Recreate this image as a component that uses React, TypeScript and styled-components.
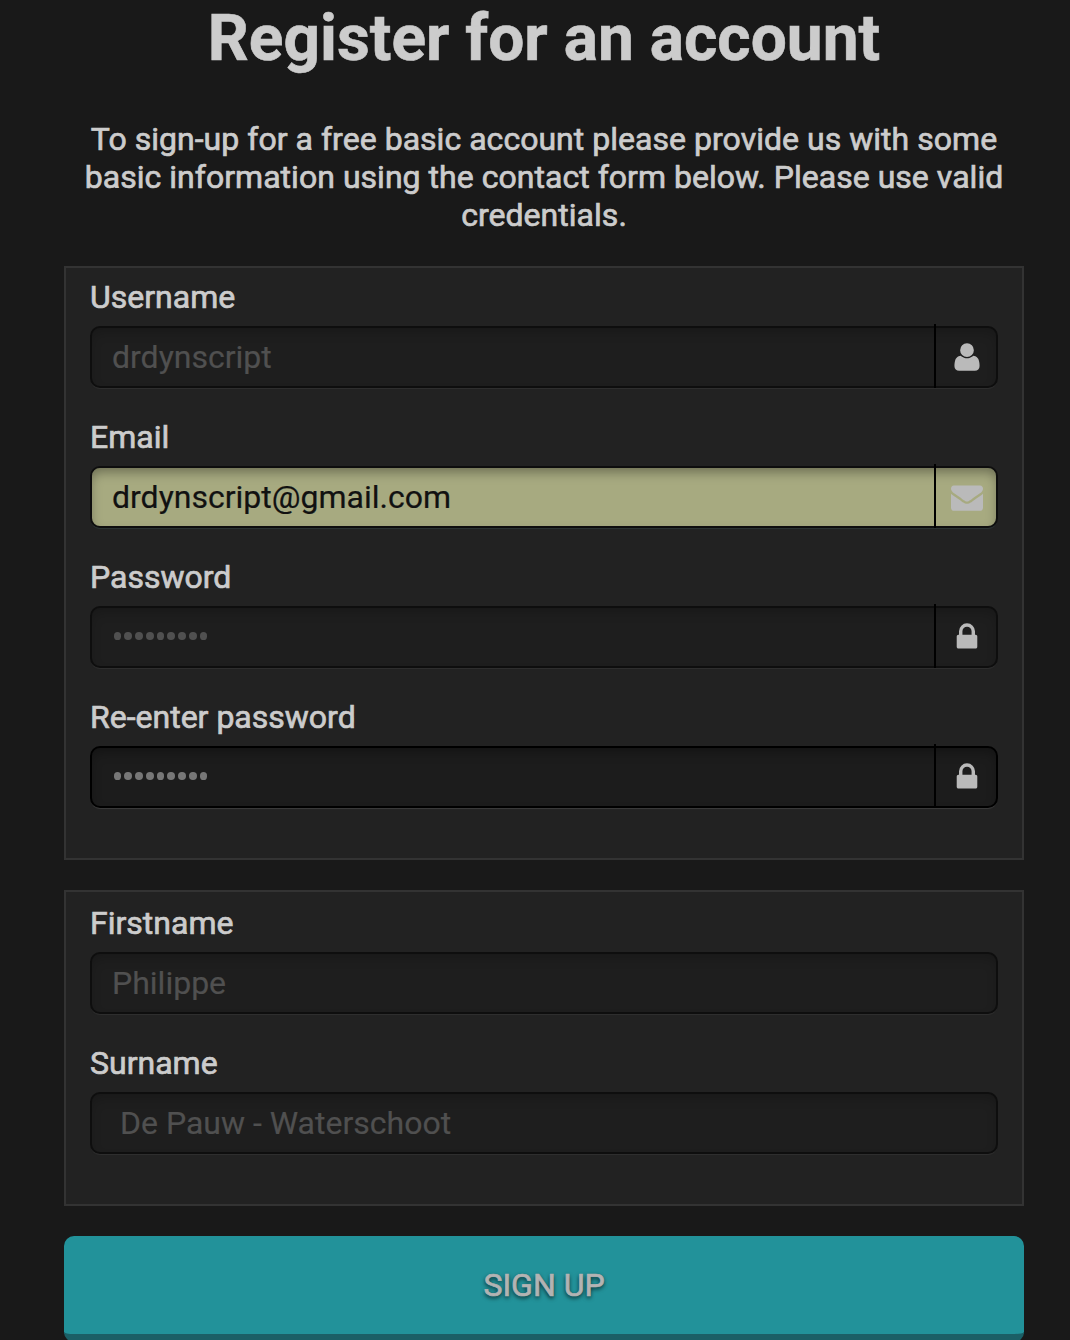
import React from "react";
import styled, { createGlobalStyle } from "styled-components";

const GlobalStyle = createGlobalStyle`
  *, *::before, *::after { box-sizing: border-box; }
  html, body { margin: 0; height: 1340px; overflow: hidden; background: #191919; }
  body { font-family: Roboto, "Liberation Sans", sans-serif; color: #ccc; }
`;

const Page = styled.main`
  width: 1070px;
  height: 1340px;
  overflow: hidden;
  background: #191919;
  padding: 0 46px 0 64px;
`;

const Title = styled.h1`
  margin: 0;
  height: 120px;
  padding-top: 1px;
  font-size: 64px;
  line-height: 76px;
  font-weight: 700;
  text-align: center;
  white-space: nowrap;
  -webkit-text-stroke: 0.6px currentColor;
`;

const Intro = styled.p`
  margin: 0 0 32px;
  font-size: 32px;
  line-height: 38px;
  letter-spacing: 0.03px;
  text-align: center;
  -webkit-text-stroke: 0.7px currentColor;
`;

const Form = styled.form`
  display: flex;
  flex-direction: column;
  gap: 30px;
`;

const Panel = styled.section<{ $top?: number }>`
  display: flex;
  flex-direction: column;
  gap: 30px;
  padding: ${(p) => p.$top ?? 10}px 24px 50px;
  border: 2px solid #333;
  background: #222;
`;

const Group = styled.div`
  display: flex;
  flex-direction: column;
  gap: 10px;
`;

const Label = styled.label`
  height: 38px;
  font-size: 32px;
  line-height: 38px;
  -webkit-text-stroke: 0.7px currentColor;
`;

type Tone = "muted" | "filled" | "active";

const tones = {
  muted: { bg: "#1e1e1e", edge: "#0e0e0e", ink: "#505050", glow: "rgba(0,0,0,.2)", rim: "#303030" },
  filled: { bg: "#a7aa80", edge: "#0e0e0e", ink: "#111", glow: "rgba(0,0,0,.36)", rim: "#2d3636" },
  active: { bg: "#1c1c1c", edge: "#000", ink: "#777", glow: "rgba(0,0,0,.3)", rim: "#3c3c3c" },
};

const Field = styled.div<{ $tone: Tone }>`
  display: flex;
  height: 62px;
  border: 2px solid ${(p) => tones[p.$tone].edge};
  border-radius: 10px;
  background: ${(p) => tones[p.$tone].bg};
  color: ${(p) => tones[p.$tone].ink};
  box-shadow: inset 0 6px 12px -2px ${(p) => tones[p.$tone].glow}, 0 2px 1px -1px ${(p) => tones[p.$tone].rim};
`;

const Value = styled.div<{ $indent?: number }>`
  flex: 1;
  padding-left: ${(p) => 20 + (p.$indent ?? 0)}px;
  font-size: 32px;
  line-height: 58px;
  white-space: nowrap;
  -webkit-text-stroke: 0.2px currentColor;
`;

const Dots = styled.div`
  flex: 1;
  display: flex;
  align-items: center;
  gap: 3px;
  padding: 0 0 2px 21.5px;
`;

const Dot = styled.i`
  width: 7.75px;
  height: 8px;
  border-radius: 50%;
  background: currentColor;
`;

const Addon = styled.div`
  display: flex;
  align-items: center;
  justify-content: center;
  width: 64px;
  margin: -4px -2px -2px 0;
  padding-top: 1px;
  border-left: 2px solid #000;
  color: #bababa;
`;

const Submit = styled.button`
  height: 106px;
  padding: 0;
  border: 0;
  border-bottom: 8px solid #1b5f66;
  border-radius: 10px;
  background: #22929a;
  color: #b3b3b3;
  font-family: inherit;
  font-size: 32px;
  line-height: 38px;
  text-shadow: 0 2px 4px rgba(0, 0, 0, 0.8);
  -webkit-text-stroke: 0.7px currentColor;
`;

const icons = {
  user: "M1600 1405q0 120-73 189.5t-194 69.5h-874q-121 0-194-69.5t-73-189.5q0-53 3.5-103.5t14-109 26.5-108.5 43-97.5 62-81 85.5-53.5 111.5-20q9 0 42 21.5t74.5 48 108 48 133.5 21.5 133.5-21.5 108-48 74.5-48 42-21.5q61 0 111.5 20t85.5 53.5 62 81 43 97.5 26.5 108.5 14 109 3.5 103.5zm-320-893q0 159-112.5 271.5t-271.5 112.5-271.5-112.5-112.5-271.5 112.5-271.5 271.5-112.5 271.5 112.5 112.5 271.5z",
  envelope: "M1792 710v794q0 66-47 113t-113 47h-1472q-66 0-113-47t-47-113v-794q44 49 101 87 362 246 497 345 57 42 92.5 65.5t94.5 48 110 24.5h2q51 0 110-24.5t94.5-48 92.5-65.5q170-123 498-345 57-39 100-87zm0-294q0 79-49 151t-122 123q-376 261-468 325-10 7-42.5 31t-54 38.5-52 32.5-57.5 27-50 9h-2q-23 0-50-9t-57.5-27-52-32.5-54-38.5-42.5-31q-91-64-262-182.5t-205-142.5q-62-42-117-115.5t-55-136.5q0-78 41.5-130t118.5-52h1472q65 0 112.5 47t47.5 113z",
  lock: "M640 768h512v-192q0-106-75-181t-181-75-181 75-75 181v192zm832 96v576q0 40-28 68t-68 28h-960q-40 0-68-28t-28-68v-576q0-40 28-68t68-28h32v-192q0-184 132-316t316-132 316 132 132 316v192h32q40 0 68 28t28 68z",
};

interface RowProps {
  label: string;
  value?: string;
  dots?: number;
  tone?: Tone;
  icon?: keyof typeof icons;
  indent?: number;
}

function FormRow({ label, value, dots, tone = "muted", icon, indent }: RowProps) {
  return (
    <Group>
      <Label>{label}</Label>
      <Field $tone={tone}>
        {dots ? (
          <Dots>
            {Array.from({ length: dots }, (_, i) => (
              <Dot key={i} />
            ))}
          </Dots>
        ) : (
          <Value $indent={indent}>{value}</Value>
        )}
        {icon && (
          <Addon>
            <svg width="32" height="32" viewBox="0 0 1792 1792" fill="currentColor">
              <path d={icons[icon]} />
            </svg>
          </Addon>
        )}
      </Field>
    </Group>
  );
}

export default function App() {
  return (
    <>
      <GlobalStyle />
      <Page>
        <Title>Register for an account</Title>
        <Intro>
          To sign-up for a free basic account please provide us with some
          <br />
          basic information using the contact form below. Please use valid
          <br />
          credentials.
        </Intro>
        <Form>
          <Panel>
            <FormRow label="Username" value="drdynscript" icon="user" />
            <FormRow label="Email" value="drdynscript@gmail.com" tone="filled" icon="envelope" />
            <FormRow label="Password" dots={9} icon="lock" />
            <FormRow label="Re-enter password" dots={9} tone="active" icon="lock" />
          </Panel>
          <Panel $top={12}>
            <FormRow label="Firstname" value="Philippe" />
            <FormRow label="Surname" value="De Pauw - Waterschoot" indent={8} />
          </Panel>
          <Submit type="button">SIGN UP</Submit>
        </Form>
      </Page>
    </>
  );
}
